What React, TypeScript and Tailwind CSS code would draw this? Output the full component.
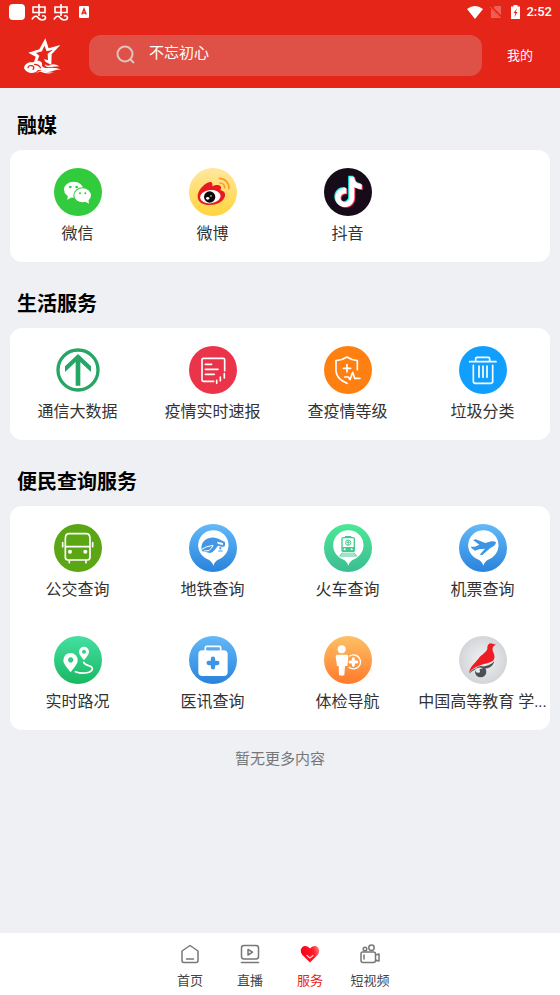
import type { ReactNode } from 'react';

type Service = { label: string; icon: ReactNode };
type Section = { title: string; items: Service[] };

function Disc({ fill, children }: { fill: string; children: ReactNode }) {
  return (
    <svg viewBox="0 0 144 144" className="size-12 shrink-0" aria-hidden="true">
      <circle cx="72" cy="72" r="72" fill={fill} />
      {children}
    </svg>
  );
}

function Gradients() {
  const stops: [string, string, string][] = [
    ['g-yellow', '#ffe7a0', '#ffd43c'],
    ['g-blue', '#63b8f8', '#2a83dc'],
    ['g-mint', '#4be896', '#3bbd93'],
    ['g-green', '#45dfa2', '#18b862'],
    ['g-orange', '#fdc064', '#ff7a2c'],
  ];
  return (
    <svg className="absolute size-0" aria-hidden="true">
      <defs>
        {stops.map(([id, from, to]) => (
          <linearGradient key={id} id={id} x1="0" y1="0" x2="0" y2="1">
            <stop offset="0" stopColor={from} />
            <stop offset="1" stopColor={to} />
          </linearGradient>
        ))}
        <radialGradient id="g-gray">
          <stop offset="0" stopColor="#f2f2f3" />
          <stop offset="1" stopColor="#d3d5d8" />
        </radialGradient>
        <linearGradient id="g-heart" x1="0" y1="0.3" x2="1" y2="0">
          <stop offset="0" stopColor="#ff0014" />
          <stop offset="0.6" stopColor="#ff1a2a" />
          <stop offset="1" stopColor="#ff8d90" />
        </linearGradient>
      </defs>
    </svg>
  );
}

const line = {
  fill: 'none',
  stroke: '#fff',
  strokeWidth: 5,
  strokeLinecap: 'round',
  strokeLinejoin: 'round',
} as const;

const PIN = 'M73 19 A45 45 0 0 1 92 105 Q78 110 73 125 Q68 110 54 105 A45 45 0 0 1 73 19Z';

const NOTE =
  'M12.525.02c1.31-.02 2.61-.01 3.91-.02.08 1.53.63 3.09 1.75 4.17 1.12 1.11 2.7 1.62 4.24 1.79v4.03c-1.44-.05-2.89-.35-4.2-.97-.57-.26-1.1-.59-1.62-.93-.01 2.92.01 5.84-.02 8.75-.08 1.4-.54 2.79-1.35 3.94-1.31 1.92-3.58 3.17-5.91 3.21-1.43.08-2.86-.31-4.08-1.03-2.02-1.19-3.44-3.37-3.65-5.71-.02-.5-.03-1-.01-1.49.18-1.9 1.12-3.72 2.58-4.96 1.66-1.44 3.98-2.13 6.15-1.72.02 1.48-.04 2.96-.04 4.44-.99-.32-2.15-.23-3.02.37-.63.41-1.11 1.04-1.36 1.75-.21.51-.15 1.07-.14 1.61.24 1.64 1.82 3.02 3.5 2.87 1.12-.01 2.19-.66 2.77-1.61.19-.33.4-.67.41-1.06.1-1.79.06-3.57.07-5.36.01-4.03-.01-8.05.02-12.07z';

const wechat = (
  <Disc fill="#33cb3e">
    <path d="M42 80 L40 95 L56 86Z" fill="#fff" />
    <ellipse cx="59" cy="65" rx="29" ry="24" fill="#fff" />
    <ellipse cx="86" cy="82" rx="28" ry="24" fill="#33cb3e" />
    <ellipse cx="86" cy="82" rx="25" ry="21" fill="#fff" />
    <path d="M90 99 L105 107 L103 94Z" fill="#fff" />
    <g fill="#33cb3e">
      <circle cx="49" cy="57" r="4" />
      <circle cx="68" cy="57" r="4" />
      <circle cx="78" cy="76" r="3" />
      <circle cx="94" cy="76" r="3" />
    </g>
  </Disc>
);

const weibo = (
  <Disc fill="url(#g-yellow)">
    <path
      d="M26 86 C26 68 44 48 60 43 C68 40 72 46 70 55 C80 50 95 49 96 58 C97 62 94 66 94 66 C104 69 110 74 108 84 C104 102 82 111 62 111 C42 111 26 102 26 86Z"
      fill="#ea1920"
    />
    <ellipse cx="64" cy="86" rx="31" ry="20" fill="#fff" transform="rotate(-6 64 86)" />
    <circle cx="62" cy="87" r="17" fill="#0c0c0c" />
    <ellipse cx="56" cy="91" rx="5" ry="4" fill="#fff" />
    <circle cx="66" cy="84" r="2.5" fill="#fff" />
    <path d="M91 31 A29 29 0 0 1 120 62" fill="none" stroke="#fb9b24" strokeWidth="5" strokeLinecap="round" />
    <path d="M93 45 A14 14 0 0 1 107 59" fill="none" stroke="#fb9b24" strokeWidth="5" strokeLinecap="round" />
  </Disc>
);

const douyin = (
  <Disc fill="#170b1a">
    <path d={NOTE} fill="#25f4ee" transform="translate(25 23) scale(3.8)" />
    <path d={NOTE} fill="#fe2c55" transform="translate(31 28) scale(3.8)" />
    <path d={NOTE} fill="#fff" transform="translate(28 26) scale(3.8)" />
  </Disc>
);

const telecom = (
  <Disc fill="#fff">
    <circle cx="72" cy="72" r="60" fill="none" stroke="#26a564" strokeWidth="10" />
    <path d="M72 24 L111 61 V78 L79 48 V119 H65 V48 L33 78 V61Z" fill="#26a564" />
  </Disc>
);

const report = (
  <Disc fill="#eb3349">
    <path
      {...line}
      d="M107 74 V41 q0-4-4-4 H43 q-4 0-4 4 V102 q0 4 4 4 H74 M49 55H68 M49 70H87 M49 85H76 M83 103V112 M94 93V104 M106 83V96"
    />
  </Disc>
);

const shield = (
  <Disc fill="#ff7f11">
    <path
      {...line}
      d="M100 71 V44 Q82 42 69 33 Q56 42 36 44 V76 Q38 98 69 112 M69 56V78 M58 67H80 M62 93H73L78 101L86 79L92 97H108"
    />
  </Disc>
);

const trash = (
  <Disc fill="#119fff">
    <path
      {...line}
      d="M32 47H111 M50 47V38q0-4 4-4H88q4 0 4 4V47 M43 58V106q0 6 6 6H95q6 0 6-6V58 M60 60V94 M72 60V94 M84 60V94"
    />
  </Disc>
);

const bus = (
  <Disc fill="#5aa615">
    <path
      {...line}
      d="M44 29H98Q108 29 108 45V100Q108 108 100 108H42Q34 108 34 100V45Q34 29 44 29Z M34 68H108 M26 56V68 M116 56V68 M46 109V116 M96 109V116"
    />
    <circle cx="48" cy="83" r="6" fill="#fff" />
    <circle cx="94" cy="83" r="6" fill="#fff" />
  </Disc>
);

const metro = (
  <Disc fill="url(#g-blue)">
    <path d={PIN} fill="#fff" />
    <path
      d="M37 72 C37 50 58 38 77 41 C91 43 99 50 108 54 V65 L101 69 L87 65 C80 72 77 83 63 87 L40 82 Q38 78 37 72Z"
      fill="#4397e6"
    />
    <path d="M38 76 Q52 66 73 64 M44 81 L60 80 Q66 74 72 66" stroke="#fff" strokeWidth="3" fill="none" />
    <path d="M84 53 L102 57 V63 L87 60Z" fill="#fff" />
    <path d="M90 72 H98 M94 69V77 M88 81H101" stroke="#4397e6" strokeWidth="3" fill="none" />
  </Disc>
);

const train = (
  <Disc fill="url(#g-mint)">
    <path d={PIN} fill="#fff" />
    <g fill="none" stroke="#43ca91" strokeWidth="4">
      <rect x="54" y="41" width="37" height="42" rx="4" />
      <path d="M63 38H82" />
      <circle cx="72.500" cy="56" r="8" strokeWidth="3" />
      <path d="M72.500 50V63 M68 55H77 M55 86L47 97 M90 86L98 97 M54 90H91 M48 96H97" strokeWidth="3" />
    </g>
    <path d="M55 69H90V82H55Z" fill="#43ca91" />
    <circle cx="62" cy="76" r="3" fill="#fff" />
    <circle cx="83" cy="76" r="3" fill="#fff" />
  </Disc>
);

const plane = (
  <Disc fill="url(#g-blue)">
    <path d={PIN} fill="#fff" />
    <path
      d="M111 55 Q106 51 97 52 L79 57 L50 46 L42 48 L61 62 L48 68 L37 68 L36 71 L48 80 L60 76 L78 74 L62 92 L70 93 L94 72 Q110 66 111 55Z"
      fill="#3f95e5"
    />
  </Disc>
);

const road = (
  <Disc fill="url(#g-green)">
    <path
      fillRule="evenodd"
      fill="#fff"
      d="M50 51 A21.500 21.500 0 0 1 71 73 C71 85 60 95 50 109 C41 97 28 85 28 73 A21.500 21.500 0 0 1 50 51Z M50 64a8 8 0 1 0 .1 0Z M90 32 A15 15 0 0 1 105 47 C105 56 97 63 90 73 C83 63 75 56 75 47 A15 15 0 0 1 90 32Z M90 41a6 6 0 1 0 .1 0Z"
    />
    <path {...line} d="M89 79 C93 91 112 87 115 96 C117 110 88 116 64 107" />
  </Disc>
);

const medkit = (
  <Disc fill="url(#g-blue)">
    <rect x="28" y="43" width="88" height="77" rx="12" fill="#fff" />
    <path {...line} d="M49 43V35q0-4 4-4H91q4 0 4 4V43" />
    <path d="M55 37H89V43H55Z" fill="#57aaf1" />
    <path d="M72 68V94 M59 81H85" stroke="#3f95e5" strokeWidth="13" strokeLinecap="round" />
  </Disc>
);

const checkup = (
  <Disc fill="url(#g-orange)">
    <circle cx="53" cy="40" r="12" fill="#fff" />
    <path
      d="M39 56H68Q73 56 73 62L70 90H63L61 117Q53 122 45 117L44 90H39L35 62Q35 56 39 56Z"
      fill="#fff"
    />
    <path d="M76 61 A21 21 0 1 1 74 93" fill="none" stroke="#fff" strokeWidth="4" />
    <path d="M88 68V88 M78 78H98" stroke="#fff" strokeWidth="9" strokeLinecap="round" />
  </Disc>
);

const education = (
  <Disc fill="url(#g-gray)">
    <path
      d="M111 26 L104 30 Q99 34 101 45 Q110 60 104 72 C92 86 58 80 30 109 C34 91 46 84 58 68 C68 54 88 47 85 33 Q88 19 101 23Z"
      fill="#ef1c23"
    />
    <path d="M30 113 C48 85 84 100 106 76 C102 92 88 98 76 98 C60 95 46 99 30 113Z" fill="#4b5157" />
    <circle cx="65" cy="107" r="17" fill="#4b5157" />
    <path d="M48 100 Q50 113 60 110 Q66 107 61 101 Q66 96 73 98 Q61 90 48 100Z" fill="#e9eaeb" />
  </Disc>
);

const sections: Section[] = [
  {
    title: '融媒',
    items: [
      { label: '微信', icon: wechat },
      { label: '微博', icon: weibo },
      { label: '抖音', icon: douyin },
    ],
  },
  {
    title: '生活服务',
    items: [
      { label: '通信大数据', icon: telecom },
      { label: '疫情实时速报', icon: report },
      { label: '查疫情等级', icon: shield },
      { label: '垃圾分类', icon: trash },
    ],
  },
  {
    title: '便民查询服务',
    items: [
      { label: '公交查询', icon: bus },
      { label: '地铁查询', icon: metro },
      { label: '火车查询', icon: train },
      { label: '机票查询', icon: plane },
      { label: '实时路况', icon: road },
      { label: '医讯查询', icon: medkit },
      { label: '体检导航', icon: checkup },
      { label: '中国高等教育 学...', icon: education },
    ],
  },
];

function NotificationGlyph() {
  return (
    <svg viewBox="0 0 16 18" className="h-[18px] w-4" fill="none" stroke="#fff" strokeWidth="1.600" aria-hidden="true">
      <path d="M8 1V13 M2 4H14V9.500H2Z M1 16.500Q3 12.500 6 13.500Q8 16.500 11 17Q14.500 17 14.500 14.500Q14 12 11 13" />
    </svg>
  );
}

function StatusBar() {
  return (
    <div className="flex h-6 items-center justify-between pr-2 pl-[9px]">
      <div className="flex items-center gap-[6px]">
        <span className="size-4 rounded-[4px] bg-white" />
        <NotificationGlyph />
        <NotificationGlyph />
        <svg viewBox="0 0 10 12" className="ml-1 h-3 w-[10px]" aria-hidden="true">
          <rect width="10" height="12" rx="1" fill="#fff" />
          <path d="M2.800 8.500L5 3L7.200 8.500M3.700 7H6.300" fill="none" stroke="#e42518" strokeWidth="1.400" />
        </svg>
      </div>
      <div className="flex items-center">
        <svg viewBox="0 0 16 13" className="h-[13px] w-4" aria-hidden="true">
          <path d="M0 3Q8-3 16 3L8 13Z" fill="#fff" />
        </svg>
        <svg viewBox="0 0 12 14" className="ml-[7px] h-[14px] w-3" aria-hidden="true">
          <path d="M5 1H11V13H1V5Z" fill="#ec6057" />
          <path d="M0 1L12 13" stroke="#e42518" strokeWidth="2.500" />
          <path d="M0 2L11 13" stroke="#ec6057" strokeWidth="1" />
        </svg>
        <svg viewBox="0 0 9 14" className="ml-[9px] h-[14px] w-[9px]" aria-hidden="true">
          <path d="M0 1.500H2.500V0H6.500V1.500H9V14H0Z" fill="#fff" />
          <path d="M6 3.500L2.500 8H4.300L3.500 12L6.500 7H4.700Z" fill="#e42518" />
        </svg>
        <span className="ml-[6px] text-[13px] leading-6 font-medium text-white">2:52</span>
      </div>
    </div>
  );
}

function Logo() {
  return (
    <svg viewBox="0 0 114 114" className="size-[38px]" aria-label="首页标志" role="img">
      <path
        fillRule="evenodd"
        d="M64 4L74 34L109 24L83 52L82 84L64 74L60 66L72 70L71 50L87 38L68 43L61 26L54 43L36 48L46 56L40 72L30 76L35 59L13 47L46 37Z"
        fill="#fff"
      />
      <path
        d="M0 94C2 78 16 74 28 76C40 66 58 72 54 86C60 96 72 92 84 92Q98 92 114 98C98 96 88 104 72 105C58 106 52 98 42 99C34 112 8 112 0 94Z"
        fill="#fff"
      />
      <path d="M12 94Q12 84 24 86Q34 90 26 98 M30 82Q46 82 50 94" fill="none" stroke="#e42518" strokeWidth="4" />
      <path d="M34 111Q46 100 58 107Q76 112 92 106Q74 108 60 103Q44 98 34 111Z" fill="#fff" />
      <path d="M62 82Q72 90 86 82Q98 82 106 88Q84 90 74 91Q64 91 62 82Z" fill="#fff" />
    </svg>
  );
}

function Header() {
  return (
    <header className="bg-[#e42518]">
      <StatusBar />
      <div className="flex h-16 items-center">
        <a href="#home" className="mr-[27px] ml-6 block">
          <Logo />
        </a>
        <label className="mb-[2px] flex h-[41px] min-w-0 flex-1 items-center rounded-xl bg-[#df5147] pb-1 pl-[27px]">
          <svg viewBox="0 0 20 20" className="mt-1 mr-[13px] size-5 shrink-0" fill="none" stroke="#dfc4c1" strokeWidth="2" aria-hidden="true">
            <circle cx="9" cy="9" r="7.500" />
            <path d="M14 14L18 18" />
          </svg>
          <input
            type="text"
            aria-label="搜索"
            defaultValue="不忘初心"
            className="min-w-0 flex-1 bg-transparent text-[15px] leading-6 text-white outline-none"
          />
        </label>
        <button type="button" className="w-[78px] pr-[2px] text-[13px] leading-6 text-white">
          我的
        </button>
      </div>
    </header>
  );
}

function ServiceCard({ title, items }: Section) {
  return (
    <section>
      <h2 className="flex h-[66px] items-center px-[7px] pt-[18px] text-[20px] leading-7 font-bold text-black">{title}</h2>
      <div className="grid grid-cols-4 rounded-xl bg-white">
        {items.map(({ label, icon }) => (
          <a key={label} href="#service" className="flex h-28 min-w-0 flex-col items-center px-[2px] pt-[18px]">
            {icon}
            <span className="mt-[6px] max-w-full truncate text-[16px] leading-6 text-[#333]">{label}</span>
          </a>
        ))}
      </div>
    </section>
  );
}

const tabIcon = { fill: 'none', stroke: '#777', strokeWidth: 1.5, strokeLinecap: 'round', strokeLinejoin: 'round' } as const;

const tabs: (Service & { active?: boolean })[] = [
  {
    label: '首页',
    icon: (
      <svg viewBox="0 0 20 20" className="size-5" {...tabIcon} aria-hidden="true">
        <path d="M2 7L10 1.500L18 7V16.500Q18 18.500 16 18.500H4Q2 18.500 2 16.500Z M6.500 15H13.500" />
      </svg>
    ),
  },
  {
    label: '直播',
    icon: (
      <svg viewBox="0 0 20 20" className="size-5" {...tabIcon} aria-hidden="true">
        <rect x="1.500" y="1.500" width="17" height="13.500" rx="2.500" />
        <path d="M8 5.500L12.500 8.200L8 11Z M1.500 18.500H18.500" />
      </svg>
    ),
  },
  {
    label: '服务',
    active: true,
    icon: (
      <svg viewBox="0 0 20 20" className="size-5" aria-hidden="true">
        <path d="M10 18.500L2 10.500C-1 6 2 2 5.500 2Q8.500 2 10 4.500Q11.500 2 14.500 2C18 2 21 6 18 10.500Z" fill="url(#g-heart)" />
        <path d="M7 11.500L10 14L13 11.500" fill="none" stroke="#ffd0d0" strokeWidth="1.200" strokeLinecap="round" />
      </svg>
    ),
  },
  {
    label: '短视频',
    icon: (
      <svg viewBox="0 0 20 20" className="size-5" {...tabIcon} aria-hidden="true">
        <circle cx="5" cy="5" r="1.800" />
        <circle cx="11.500" cy="3.800" r="2.700" />
        <path d="M2.500 8H13.500Q15.500 8 15.500 10V16.500Q15.500 18.500 13.500 18.500H3Q1 18.500 1 16.500V10Q1 8 2.500 8Z M15.500 11L19 10V17L15.500 16 M4 11V15" />
      </svg>
    ),
  },
];

function TabBar() {
  return (
    <nav className="sticky bottom-0 flex h-[62px] justify-center bg-white">
      {tabs.map(({ label, icon, active }) => (
        <a
          key={label}
          href="#tab"
          aria-current={active ? 'page' : undefined}
          className={
            active
              ? 'flex w-[60px] flex-col items-center pt-[11px] text-[#e42518]'
              : 'flex w-[60px] flex-col items-center pt-[11px] text-[#444]'
          }
        >
          {icon}
          <span className="mt-[7px] text-[13px] leading-5">{label}</span>
        </a>
      ))}
    </nav>
  );
}

export default function App() {
  return (
    <div className="flex min-h-screen flex-col bg-[#eff0f4] font-[Roboto,'Noto_Sans_CJK_SC',sans-serif]">
      <Gradients />
      <Header />
      <main className="-mt-1 flex-1 px-[10px]">
        {sections.map((section) => (
          <ServiceCard key={section.title} {...section} />
        ))}
        <p className="py-[17px] text-center text-[15px] leading-6 text-[#777]">暂无更多内容</p>
      </main>
      <TabBar />
    </div>
  );
}
